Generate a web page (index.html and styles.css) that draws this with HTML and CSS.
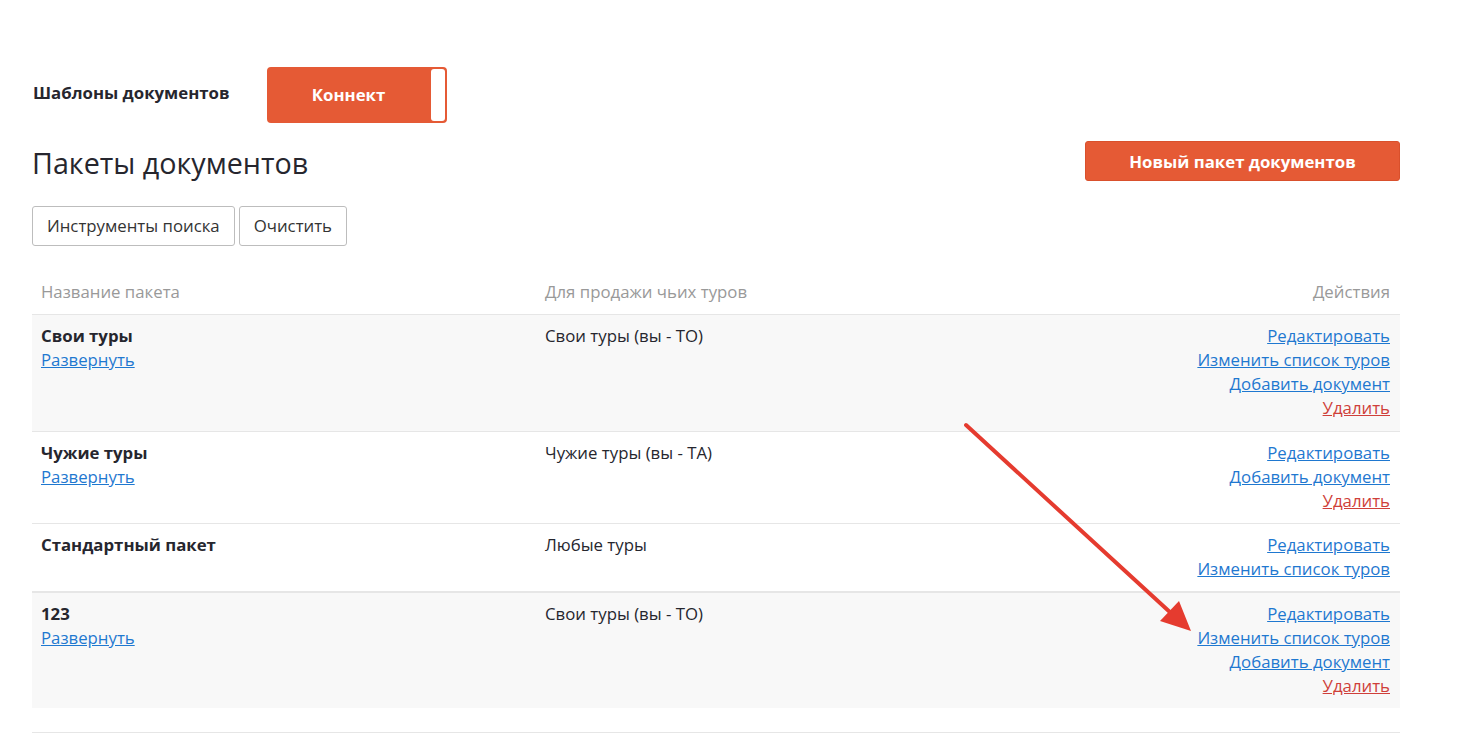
FILE: index.html
```html
<!DOCTYPE html>
<html lang="ru">
<head>
    <meta charset="UTF-8">
    <meta name="viewport" content="width=device-width, initial-scale=1.0">
    <title>Пакеты документов</title>
    <link rel="stylesheet" href="styles.css">
</head>
<body>
    <div class="page">
        <div class="templates-bar">
            <span class="templates-label">Шаблоны документов</span>
            <button class="toggle">
                <span class="toggle-text">Коннект</span>
                <span class="toggle-knob"></span>
            </button>
        </div>

        <div class="title-row">
            <h1>Пакеты документов</h1>
            <button class="btn-primary">Новый пакет документов</button>
        </div>

        <div class="tools">
            <button class="btn-default">Инструменты поиска</button>
            <button class="btn-default">Очистить</button>
        </div>

        <table class="packages">
            <thead>
                <tr>
                    <th class="col-name">Название пакета</th>
                    <th class="col-for">Для продажи чьих туров</th>
                    <th class="col-actions">Действия</th>
                </tr>
            </thead>
            <tbody>
                <tr class="striped first">
                    <td><b>Свои туры</b><br><a href="#">Развернуть</a></td>
                    <td>Свои туры (вы - ТО)</td>
                    <td class="col-actions">
                        <a href="#">Редактировать</a><br>
                        <a href="#">Изменить список туров</a><br>
                        <a href="#">Добавить документ</a><br>
                        <a href="#" class="danger">Удалить</a>
                    </td>
                </tr>
                <tr>
                    <td><b>Чужие туры</b><br><a href="#">Развернуть</a></td>
                    <td>Чужие туры (вы - ТА)</td>
                    <td class="col-actions">
                        <a href="#">Редактировать</a><br>
                        <a href="#">Добавить документ</a><br>
                        <a href="#" class="danger">Удалить</a>
                    </td>
                </tr>
                <tr>
                    <td><b>Стандартный пакет</b></td>
                    <td>Любые туры</td>
                    <td class="col-actions">
                        <a href="#">Редактировать</a><br>
                        <a href="#">Изменить список туров</a>
                    </td>
                </tr>
            </tbody>
            <tbody class="group">
                <tr class="striped">
                    <td><b>123</b><br><a href="#">Развернуть</a></td>
                    <td>Свои туры (вы - ТО)</td>
                    <td class="col-actions">
                        <a href="#">Редактировать</a><br>
                        <a href="#">Изменить список туров</a><br>
                        <a href="#">Добавить документ</a><br>
                        <a href="#" class="danger">Удалить</a>
                    </td>
                </tr>
            </tbody>
            <tfoot>
                <tr><td colspan="3"></td></tr>
            </tfoot>
        </table>
    </div>

    <!-- стрелка-указатель поверх таблицы -->
    <svg class="pointer" width="1482" height="740" viewBox="0 0 1482 740">
        <line x1="966" y1="425" x2="1172" y2="614" stroke="#e53b2f" stroke-width="4" stroke-linecap="round"/>
        <polygon points="1191,631 1160,621 1179,601" fill="#e53b2f"/>
    </svg>
</body>
</html>
```

FILE: styles.css
```css
body {
    font-family: 'Open Sans', 'Liberation Sans', sans-serif;
    font-size: 16.8px;
    color: #26262e;
    margin: 0;
    background-color: #fff;
}
.page {
    width: 1368px;
    margin-left: 32px;
    padding-top: 67px;
}
.templates-bar {
    display: flex;
    align-items: center;
    gap: 37px;
}
.templates-label {
    font-weight: bold;
    padding-left: 1px;
    margin-top: -6px;
}
.toggle {
    display: flex;
    align-items: stretch;
    width: 180px;
    height: 56px;
    padding: 0;
    border: 2px solid #e55a35;
    border-radius: 4px;
    background-color: #e55a35;
    font-family: inherit;
    cursor: pointer;
}
.toggle-text {
    flex: 1;
    display: flex;
    align-items: center;
    justify-content: center;
    color: #fff;
    font-size: 16.8px;
    font-weight: bold;
    padding: 0 2px 2px 0;
}
.toggle-knob {
    width: 14px;
    background-color: #fff;
    border-radius: 3px;
}
.title-row {
    display: flex;
    justify-content: space-between;
    align-items: center;
    margin-top: 18px;
}
h1 {
    font-size: 28.7px;
    font-weight: normal;
    color: #26262e;
    margin: 0;
    line-height: 40px;
    position: relative;
    top: 2px;
}
.btn-primary {
    width: 315px;
    height: 40px;
    background-color: #e55a35;
    color: #fff;
    border: 1px solid #d9502c;
    border-radius: 3px;
    font-family: inherit;
    font-size: 16.8px;
    font-weight: bold;
    cursor: pointer;
}
.tools {
    display: flex;
    gap: 4px;
    margin-top: 25px;
}
.btn-default {
    height: 40px;
    padding: 0 14px 2px;
    background-color: #fff;
    color: #333;
    border: 1px solid #bdbdbd;
    border-radius: 3px;
    font-family: inherit;
    font-size: 16.8px;
    cursor: pointer;
}
.packages {
    width: 100%;
    border-collapse: collapse;
    margin-top: 24px;
}
.packages th, .packages td {
    text-align: left;
    vertical-align: top;
    padding: 9px 10px 10px 9px;
    line-height: 24px;
}
.packages th {
    font-weight: normal;
    color: #999;
    padding-top: 10px;
    border-bottom: 1px solid #e6e6e6;
}
.packages td {
    border-top: 1px solid #e6e6e6;
}
.packages .first td {
    padding-bottom: 11px;
}
.col-name {
    width: 485px;
}
.packages .col-actions {
    text-align: right;
}
.striped td {
    background-color: #f8f8f8;
}
.packages .group td {
    border-top: 2px solid #e6e6e6;
}
.packages tfoot td {
    height: 24px;
    padding: 0;
    border-top: none;
    border-bottom: 1px solid #e6e6e6;
}
a {
    color: #1f78d0;
    text-decoration: underline;
}
a.danger {
    color: #cf3f3a;
}
.pointer {
    position: absolute;
    top: 0;
    left: 0;
    pointer-events: none;
}
```
